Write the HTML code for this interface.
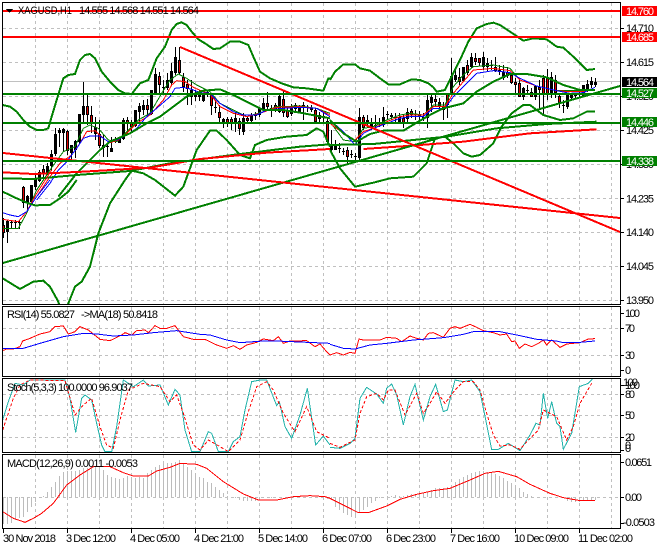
<!DOCTYPE html>
<html><head><meta charset="utf-8"><title>XAGUSD,H1</title>
<style>
html,body{margin:0;padding:0;background:#fff;width:660px;height:550px;overflow:hidden}
svg{display:block}
text{font-family:"Liberation Sans",sans-serif;font-size:11px;fill:#000}
.w text,text.w{fill:#fff}
.g{fill:none;stroke:#008000;stroke-width:6}
.r{fill:none;stroke:#ff0000;stroke-width:6}
.t{fill:none;stroke-width:3}
</style></head><body>
<svg width="660" height="550" viewBox="0 0 660 550" xmlns="http://www.w3.org/2000/svg">
<defs>
<clipPath id="cm"><rect x="3" y="3" width="617" height="301"/></clipPath>
<clipPath id="cr"><rect x="3" y="307" width="617" height="69"/></clipPath>
<clipPath id="cs"><rect x="3" y="379" width="617" height="73"/></clipPath>
<clipPath id="cd"><rect x="3" y="455" width="617" height="73"/></clipPath>
</defs>
<rect width="660" height="550" fill="#fff"/>
<g shape-rendering="crispEdges">
<!-- grid -->
<path fill="none" stroke="#c0c0c0" stroke-dasharray="3 3" d="M35.5 3V304M67.5 3V304M99.5 3V304M131.5 3V304M163.5 3V304M195.5 3V304M227.5 3V304M259.5 3V304M291.5 3V304M323.5 3V304M355.5 3V304M387.5 3V304M419.5 3V304M451.5 3V304M483.5 3V304M515.5 3V304M547.5 3V304M579.5 3V304M611.5 3V304
M35.5 307V376M67.5 307V376M99.5 307V376M131.5 307V376M163.5 307V376M195.5 307V376M227.5 307V376M259.5 307V376M291.5 307V376M323.5 307V376M355.5 307V376M387.5 307V376M419.5 307V376M451.5 307V376M483.5 307V376M515.5 307V376M547.5 307V376M579.5 307V376M611.5 307V376
M35.5 379V452M67.5 379V452M99.5 379V452M131.5 379V452M163.5 379V452M195.5 379V452M227.5 379V452M259.5 379V452M291.5 379V452M323.5 379V452M355.5 379V452M387.5 379V452M419.5 379V452M451.5 379V452M483.5 379V452M515.5 379V452M547.5 379V452M579.5 379V452M611.5 379V452
M35.5 455V528M67.5 455V528M99.5 455V528M131.5 455V528M163.5 455V528M195.5 455V528M227.5 455V528M259.5 455V528M291.5 455V528M323.5 455V528M355.5 455V528M387.5 455V528M419.5 455V528M451.5 455V528M483.5 455V528M515.5 455V528M547.5 455V528M579.5 455V528M611.5 455V528
M3 28.5H620M3 62.5H620M3 96.5H620M3 130.5H620M3 164.5H620M3 198.5H620M3 232.5H620M3 266.5H620M3 300.5H620
M3 328.5H620M3 355.5H620M3 394.5H620M3 415.5H620M3 437.5H620M3 497.5H620"/>
<path stroke="#c0c0c0" d="M3 81.5H620"/>

<!-- macd histogram -->
<path clip-path="url(#cd)" fill="none" stroke="#bcbcbc" d="M3.5 497V524M7.5 497V524M11.5 497V523M15.5 497V520M19.5 497V518M23.5 497V517M27.5 497V512M31.5 497V507M35.5 497V502M39.5 497V498M43.5 497V496M47.5 497V492M51.5 497V487M55.5 497V482M59.5 497V476M63.5 497V472M67.5 497V471M71.5 497V471M75.5 497V471M79.5 497V470M83.5 497V468M87.5 497V468M91.5 497V467M95.5 497V466M99.5 497V467M103.5 497V470M107.5 497V475M111.5 497V477M115.5 497V478M119.5 497V479M123.5 497V478M127.5 497V476M131.5 497V477M135.5 497V478M139.5 497V477M143.5 497V478M147.5 497V473M151.5 497V470M155.5 497V467M159.5 497V465M163.5 497V464M167.5 497V463M171.5 497V463M175.5 497V462M179.5 497V460M183.5 497V463M187.5 497V467M191.5 497V470M195.5 497V473M199.5 497V477M203.5 497V478M207.5 497V482M211.5 497V483M215.5 497V487M219.5 497V490M223.5 497V493M227.5 497V496M235.5 497V498M239.5 497V500M243.5 497V501M247.5 497V501M251.5 497V501M255.5 497V501M259.5 497V499M263.5 497V498M267.5 497V498M271.5 497V498M323.5 497V500M327.5 497V499M331.5 497V500M335.5 497V507M339.5 497V510M343.5 497V513M347.5 497V515M351.5 497V517M355.5 497V518M359.5 497V513M363.5 497V510M367.5 497V507M371.5 497V503M375.5 497V501M379.5 497V498M383.5 497V497M387.5 497V496M391.5 497V496M395.5 497V495M399.5 497V496M403.5 497V496M407.5 497V495M411.5 497V494M415.5 497V494M419.5 497V493M423.5 497V493M427.5 497V492M431.5 497V490M435.5 497V488M439.5 497V488M443.5 497V488M447.5 497V487M451.5 497V485M455.5 497V482M459.5 497V479M463.5 497V477M467.5 497V475M471.5 497V473M475.5 497V472M479.5 497V471M483.5 497V471M487.5 497V472M491.5 497V473M495.5 497V474M499.5 497V476M503.5 497V478M507.5 497V481M511.5 497V483M515.5 497V485M519.5 497V488M523.5 497V492M527.5 497V494M531.5 497V496M563.5 497V498M567.5 497V501M571.5 497V502M575.5 497V502M579.5 497V502M583.5 497V501M587.5 497V500M591.5 497V500M595.5 497V500"/>

<!-- candles -->
<g clip-path="url(#cm)" fill="none">
<path stroke="#000" d="M3.5 218V238M7.5 220V243M11.5 221V228M15.5 220V228M19.5 220V229M23.5 186V208M27.5 195V210M31.5 185V205M35.5 174V190M39.5 170V182M43.5 165V177M47.5 163V175M51.5 150V170M55.5 128V156M59.5 128V147M63.5 128V152M67.5 130V155M71.5 145V162M75.5 140V158M79.5 114V144M83.5 82V123M87.5 95V125M91.5 106V133M95.5 117V140M99.5 120V148M103.5 135V157M107.5 143V157M111.5 137V152M115.5 137V143M119.5 137V143M123.5 118V140M127.5 117V132M131.5 120V132M135.5 110V127M139.5 103V123M143.5 100V115M147.5 99V115M151.5 90V115M155.5 68V95M159.5 72V93M163.5 80V93M167.5 73V90M171.5 63V85M175.5 47V75M179.5 47V75M183.5 73V92M187.5 80V105M191.5 80V105M195.5 90V101M199.5 90V101M203.5 93V102M207.5 90V97M211.5 93V115M215.5 100V113M219.5 105V122M223.5 118V128M227.5 117V127M231.5 117V130M235.5 113V132M239.5 118V135M243.5 113V135M247.5 117V123M251.5 113V123M255.5 112V120M259.5 107V117M263.5 98V112M267.5 92V110M271.5 105V117M275.5 103V112M279.5 95V113M283.5 90V117M287.5 108V118M291.5 104V116M295.5 103V112M299.5 105V113M303.5 102V120M307.5 105V112M311.5 105V112M315.5 108V123M319.5 112V123M323.5 113V123M327.5 118V143M331.5 130V152M335.5 140V150M339.5 143V153M343.5 148V155M347.5 147V163M351.5 150V158M355.5 153V160M359.5 108V162M363.5 115V130M367.5 115V128M371.5 118V130M375.5 115V128M379.5 118V127M383.5 107V127M387.5 111V120M391.5 113V120M395.5 113V122M399.5 113V124M403.5 115V128M407.5 108V122M411.5 109V118M415.5 110V120M419.5 111V120M423.5 113V121M427.5 93V128M431.5 93V112M435.5 93V106M439.5 98V110M443.5 102V120M447.5 93V118M451.5 58V95M455.5 68V82M459.5 68V85M463.5 67V82M467.5 60V75M471.5 53V68M475.5 53V65M479.5 58V66M483.5 52V70M487.5 58V72M491.5 60V70M495.5 57V72M499.5 65V75M503.5 65V80M507.5 67V78M511.5 73V84M515.5 78V93M519.5 80V97M523.5 87V100M527.5 85V95M531.5 88V97M535.5 85V100M539.5 80V110M543.5 75V115M547.5 69V100M551.5 72V98M555.5 75V98M559.5 93V108M563.5 100V113M567.5 93V109M571.5 93V100M575.5 93V98M579.5 92V97M583.5 85V97M587.5 80V92M591.5 77V88M595.5 78V87"/>
<path stroke="#000" stroke-width="3" d="M3.5 225V233M7.5 221V232M11.5 222V223M15.5 222V223M19.5 222V223M23.5 187V203M27.5 196V203M31.5 185V202M35.5 179V187M39.5 172V181M43.5 169V173M47.5 166V173M51.5 154V166M55.5 134V154M59.5 130V133M63.5 129V133M67.5 131V151M71.5 145V153M75.5 141V150M79.5 114V142M83.5 106V115M87.5 106V115M91.5 115V124M95.5 127V134M99.5 134V146M103.5 145V148M107.5 146V147M111.5 148V152M115.5 140V141M119.5 138V143M123.5 120V139M127.5 120V124M131.5 123V127M135.5 110V126M139.5 106V112M143.5 105V110M147.5 105V110M151.5 90V114M155.5 74V93M159.5 76V85M163.5 87V88M167.5 80V88M171.5 71V83M175.5 57V73M179.5 60V73M183.5 77V87M187.5 84V89M191.5 90V97M195.5 94V97M199.5 94V97M203.5 94V101M207.5 92V95M211.5 95V106M215.5 107V108M219.5 112V118M223.5 119V123M227.5 119V123M231.5 119V124M235.5 118V123M239.5 121V129M243.5 118V132M247.5 118V121M251.5 115V121M255.5 115V116M259.5 108V115M263.5 103V110M267.5 103V107M271.5 108V109M275.5 105V110M279.5 96V112M283.5 99V113M287.5 110V117M291.5 106V114M295.5 105V109M299.5 106V112M303.5 105V106M307.5 107V108M311.5 108V110M315.5 110V122M319.5 115V119M323.5 116V117M327.5 121V142M331.5 144V150M335.5 144V150M339.5 148V149M343.5 151V152M347.5 150V157M351.5 154V155M355.5 156V157M359.5 117V158M363.5 117V128M367.5 120V122M371.5 122V128M375.5 125V126M379.5 123V124M383.5 117V125M387.5 114V115M391.5 115V117M395.5 117V118M399.5 117V122M403.5 118V123M407.5 112V119M411.5 111V115M415.5 116V117M419.5 115V116M423.5 117V119M427.5 100V118M431.5 97V103M435.5 99V102M439.5 102V106M443.5 107V110M447.5 93V105M451.5 76V93M455.5 75V80M459.5 77V82M463.5 67V81M467.5 65V73M471.5 57V67M475.5 58V62M479.5 58V63M483.5 57V67M487.5 63V67M491.5 65V66M495.5 67V71M499.5 70V71M503.5 72V78M507.5 72V76M511.5 75V83M515.5 82V85M519.5 83V97M523.5 88V97M527.5 90V91M531.5 92V97M535.5 86V97M539.5 87V90M543.5 78V95M547.5 78V95M551.5 77V95M555.5 80V93M559.5 96V103M563.5 105V106M567.5 95V107M571.5 95V98M575.5 95V96M579.5 94V95M583.5 85V97M587.5 84V89M591.5 81V85M595.5 82V85"/>
<path stroke="#e00000" d="M3.5 226V232M23.5 188V202M43.5 170V172M67.5 132V150M87.5 107V114M91.5 116V123M99.5 135V145M127.5 121V123M131.5 124V126M147.5 106V109M159.5 77V84M179.5 61V72M183.5 78V86M187.5 85V88M211.5 96V105M219.5 113V117M227.5 120V122M231.5 120V123M239.5 122V128M247.5 119V120M267.5 104V106M275.5 106V109M283.5 100V112M287.5 111V116M295.5 106V108M315.5 111V121M327.5 122V141M347.5 151V156M363.5 118V127M403.5 119V122M411.5 112V114M435.5 100V101M447.5 94V104M459.5 78V81M467.5 66V72M475.5 59V61M479.5 59V62M495.5 68V70M507.5 73V75M511.5 76V82M515.5 83V84M519.5 84V96M531.5 93V96M539.5 88V89M543.5 79V94M547.5 79V94M555.5 81V92M559.5 97V102"/>
</g>

<!-- main overlays, left half -->
<g clip-path="url(#cm)">
<g transform="scale(.33333)">
<polyline class="t" stroke="#008000" points="110,570 150,510 190,455 225,440 250,385 270,375 295,385 325,420 350,425 380,395 415,360 450,340 485,280 510,240 535,222 560,235 590,255 630,275 660,310 700,330 740,350 790,335 830,320 900,318 950,325 990,340"/>
<polyline class="t" stroke="#ff0000" points="110,590 150,530 180,490 215,465 240,430 260,395 285,392 310,415 330,428 355,420 380,400 410,370 450,345 490,300 515,255 530,242 555,245 580,262 610,275 630,282 660,320 700,340 740,350 780,340 830,322 900,320 950,325 990,345"/>
<polyline class="t" stroke="#0000ff" points="110,600 150,550 175,510 200,485 230,445 250,415 270,408 300,408 325,425 350,420 380,405 410,385 440,350 470,325 510,290 525,265 550,262 575,268 600,278 630,280 660,310 700,335 730,345 770,345 800,330 850,325 900,322 950,325 990,350"/>
<polyline class="g" points="8,315 30,320 50,335 70,360 90,380 110,390 130,390 145,385 155,350 170,300 190,235 205,225 225,222 240,180 255,165 270,162 285,175 305,215 330,245 355,270 375,280 395,282 420,250 445,240 470,175 495,140 515,90 530,72 545,67 560,75 575,95 595,118 615,130 640,147 660,145 690,125 720,125 745,135 760,170 780,215 810,235 845,250 880,262 920,265 970,272 985,235 990,235"/>
<polyline class="g" points="175,590 230,520 265,485 300,450 330,425 390,400 440,370 480,350 520,320 560,290 610,272 660,268 700,285 750,310 790,330 850,330 900,338 990,355"/>
<polyline class="g" points="375,540 395,512 430,520 465,540 525,587 550,560 590,450 630,392 650,392 680,420 720,465 750,475 765,435 800,420 860,410 920,405 950,385 970,395 985,430 990,440"/>
<polyline class="g" points="8,535 100,537 230,525 390,513 510,490 600,478 720,462 900,440 990,433"/>
<polyline class="r" points="8,517 100,522 250,515 450,503 600,477 800,458 990,447"/>
</g>
<g transform="translate(0,180) scale(.33333)">
<polyline class="t" stroke="#008000" points="8,145 55,145 80,100 110,30 150,-30"/>
<polyline class="t" stroke="#ff0000" points="8,118 55,125 80,95 110,40 155,-30"/>
<polyline class="t" stroke="#0000ff" points="8,98 30,105 55,110 80,95 110,50 150,0"/>
<polyline class="g" points="8,35 50,55 85,70 105,76 150,75 180,55 205,35 230,0"/>
<polyline class="g" points="8,295 60,327 100,305 130,302 150,320 175,365 185,400"/>
<polyline class="g" points="200,400 205,370 225,320 245,305 270,260 295,160 330,70 375,0"/>
</g>
<!-- right half -->
<g transform="translate(330,0) scale(.33333)">
<polyline class="t" stroke="#008000" points="0,365 40,420 75,425 100,385 130,380 170,360 210,345 240,340 280,345 310,315 345,315 370,260 400,225 430,200 490,195 540,205 570,240 620,258 680,272 720,272 760,272 795,272"/>
<polyline class="t" stroke="#ff0000" points="0,370 40,400 75,420 100,395 130,385 170,365 210,350 240,345 280,345 310,320 345,320 370,280 400,245 430,210 490,205 540,212 570,240 620,258 680,272 720,275 760,275 795,268"/>
<polyline class="t" stroke="#0000ff" points="0,360 40,395 75,435 100,400 130,385 170,370 210,355 240,350 280,350 310,325 345,325 370,290 400,260 440,220 490,212 540,218 570,235 620,258 680,272 720,280 760,278 795,262"/>
<polyline class="g" points="0,240 15,215 40,193 75,193 90,205 120,212 150,235 175,253 210,253 245,238 270,240 295,250 310,262 320,275 345,270 365,230 390,180 415,125 440,85 470,72 490,68 510,75 540,95 580,122 610,115 650,118 680,140 700,143 730,170 770,210 795,207"/>
<polyline class="g" points="0,360 40,400 80,425 120,402 160,392 220,392 270,362 300,345 340,325 400,310 440,275 490,245 540,222 590,222 650,232 700,255 750,270 795,270"/>
<polyline class="g" points="0,450 30,505 75,560 130,548 180,535 250,530 290,490 315,415 345,410 370,430 400,460 425,470 450,465 490,430 515,380 545,340 580,315 600,315 640,345 690,360 730,355 770,335 795,335"/>
<polyline class="g" points="0,435 130,432 350,410 500,385 650,372 800,365"/>
<polyline class="r" points="100,447 230,438 400,425 600,400 800,388"/>
</g>
<!-- trendlines -->
<path class="g" style="stroke-width:2" d="M3 263L620 86"/>
<path class="r" style="stroke-width:2" d="M180 47L620 232M3 153L620 218"/>
<!-- horizontal levels -->
<path class="g" style="stroke-width:2" d="M3 94H620M3 123H620M3 161H620"/>
<path class="r" style="stroke-width:2" d="M3 11H620M3 37H620"/>
</g>

<!-- RSI -->
<g clip-path="url(#cr)">
<g transform="translate(0,180) scale(.33333)">
<polyline class="t" stroke="#ff0000" points="8,512 20,507 40,507 60,500 68,483 90,475 120,462 150,455 165,440 190,438 205,462 225,455 240,440 265,450 300,478 330,482 365,465 375,458 395,465 410,452 435,450 445,458 465,437 480,445 500,445 525,437 550,470 580,478 615,478 650,495 680,505 700,497 720,508 740,495 770,487 790,477 820,482 835,470 850,490 870,483 920,482 945,500 960,492 980,515 990,525"/>
<polyline class="t" stroke="#0000ff" style="stroke-width:3" points="8,505 70,505 120,490 190,470 250,460 290,462 340,468 400,465 460,458 530,452 600,463 630,465 680,480 720,488 790,483 830,483 990,490"/>
</g>
<g transform="translate(330,180) scale(.33333)">
<polyline class="t" stroke="#ff0000" points="0,525 20,518 40,525 60,517 75,520 87,477 100,480 130,480 150,480 170,472 200,475 215,485 240,468 260,475 280,480 295,460 310,458 340,472 360,445 375,440 390,445 420,433 440,442 460,452 490,458 510,465 530,462 545,485 555,483 568,505 585,492 605,500 625,490 640,480 650,495 665,480 690,502 710,492 750,488 775,477 795,476"/>
<polyline class="t" stroke="#0000ff" points="0,493 40,505 75,507 120,495 170,490 250,480 340,473 400,463 430,455 510,455 570,467 620,478 680,483 700,488 750,487 795,483"/>
</g>
</g>

<!-- Stoch -->
<g clip-path="url(#cs)">
<g transform="translate(0,370) scale(.33333)">
<polyline class="t" stroke="#20b2aa" points="8,150 25,95 45,40 70,45 90,30 130,30 195,30 210,85 227,187 245,85 255,75 275,90 290,160 305,225 315,245 335,245 350,170 370,30 400,50 430,30 445,48 480,45 505,105 525,58 540,75 555,180 575,245 600,245 625,185 635,190 655,245 685,245 700,215 720,200 735,120 755,35 780,30 800,30 830,107 838,95 855,170 875,205 900,135 922,55 947,225 970,198 990,225"/>
<polyline class="t" stroke="#ff0000" stroke-dasharray="9 6" points="8,180 40,85 60,45 90,30 195,32 225,135 250,105 275,85 300,170 320,225 340,235 360,150 385,60 430,40 480,50 510,95 530,75 550,130 580,225 600,240 625,210 660,230 685,245 720,210 745,125 770,50 800,35 820,60 850,130 885,185 920,110 950,185 990,205"/>
</g>
<g transform="translate(330,370) scale(.33333)">
<polyline class="t" stroke="#20b2aa" points="0,232 30,235 60,220 75,205 90,85 110,52 140,72 160,100 170,55 185,42 200,75 220,165 240,80 255,43 280,150 300,80 317,43 340,125 352,120 375,30 400,35 425,30 450,65 485,238 505,238 535,220 570,242 600,195 618,160 630,165 640,70 653,145 665,95 680,160 690,170 700,238 725,190 748,50 775,40 795,18"/>
<polyline class="t" stroke="#ff0000" stroke-dasharray="9 6" points="0,220 30,232 75,210 90,130 110,80 140,70 160,90 175,60 195,60 225,135 260,70 280,130 300,100 320,65 345,100 375,60 400,35 430,35 450,60 470,130 490,195 510,228 540,225 570,238 600,205 625,180 640,120 660,130 680,140 710,210 730,170 750,100 785,40"/>
</g>
</g>

<!-- MACD signal -->
<g clip-path="url(#cd)">
<g transform="translate(0,370) scale(.33333)">
<polyline class="t" stroke="#ff0000" points="8,425 40,445 75,457 100,445 125,430 160,400 200,345 240,315 280,290 330,290 370,308 400,318 445,318 470,303 510,292 540,280 590,283 620,295 670,335 730,372 775,390 830,390 880,380 930,377 975,380 990,385"/>
</g>
<g transform="translate(330,370) scale(.33333)">
<polyline class="t" stroke="#ff0000" points="0,385 40,405 85,428 115,428 170,408 210,388 260,373 310,362 360,355 420,330 465,310 505,304 560,320 600,343 660,370 700,383 745,391 795,391"/>
</g>
</g>

<!-- frames -->
<path fill="none" stroke="#000" d="M2.5 2.5H620.5V304.5H2.5ZM2.5 306.5H620.5V376.5H2.5ZM2.5 378.5H620.5V452.5H2.5ZM2.5 454.5H620.5V528.5H2.5Z"/>
<!-- ticks -->
<path stroke="#000" d="M621 28.5H624M621 62.5H624M621 96.5H624M621 130.5H624M621 164.5H624M621 198.5H624M621 232.5H624M621 266.5H624M621 300.5H624M621 313.5H624M621 328.5H624M621 355.5H624M621 370.5H624M621 385.5H624M621 394.5H624M621 415.5H624M621 437.5H624M621 450.5H624M621 462.5H624M621 497.5H624M621 523.5H624
M3.5 529V533M67.5 529V533M131.5 529V533M195.5 529V533M259.5 529V533M323.5 529V533M387.5 529V533M451.5 529V533M515.5 529V533M579.5 529V533"/>
<path fill="#000" d="M6 9H13L9.500 13Z"/>
</g>

<!-- text -->
<text x="18" y="14" textLength="54" lengthAdjust="spacingAndGlyphs">XAGUSD,H1</text>
<text x="79" y="14" textLength="120" lengthAdjust="spacing">14.555 14.568 14.551 14.564</text>
<text x="7" y="318" textLength="68" lengthAdjust="spacing">RSI(14) 55.0827</text>
<text x="81" y="318" textLength="77" lengthAdjust="spacing">-&gt;MA(18) 50.8418</text>
<text x="7" y="391" textLength="126" lengthAdjust="spacing">Stoch(5,3,3) 100.0000 96.9037</text>
<text x="7" y="467" textLength="131" lengthAdjust="spacing">MACD(12,26,9) 0.0011 -0.0053</text>

<g>
<text x="626" y="32" textLength="28">14.710</text>
<text x="626" y="66" textLength="28">14.615</text>
<text x="626" y="100" textLength="28">14.520</text>
<text x="626" y="134" textLength="28">14.425</text>
<text x="626" y="168" textLength="28">14.330</text>
<text x="626" y="202.500" textLength="28">14.235</text>
<text x="626" y="236" textLength="28">14.140</text>
<text x="626" y="270" textLength="28">14.045</text>
<text x="626" y="304" textLength="28">13.950</text>
<text x="625" y="317" textLength="15">100</text>
<text x="625" y="332" textLength="10">70</text>
<text x="625" y="359" textLength="10">30</text>
<text x="625" y="374">0</text>
<text x="625" y="389" textLength="15">100</text>
<text x="623" y="386" textLength="15">100</text>
<text x="625" y="398" textLength="10">80</text>
<text x="625" y="419" textLength="10">50</text>
<text x="625" y="441" textLength="10">20</text>
<text x="625" y="449">0</text>
<text x="625" y="452">0</text>
<text x="625" y="466" textLength="27">0.0651</text>
<text x="625" y="501" textLength="17">0.00</text>
<text x="623" y="526" textLength="32">-0.0503</text>
</g>

<g shape-rendering="crispEdges">
<rect x="622" y="6" width="35" height="10" fill="#ff0000"/>
<rect x="622" y="32" width="35" height="10" fill="#ff0000"/>
<rect x="622" y="77" width="35" height="10" fill="#000"/>
<rect x="622" y="88" width="35" height="10" fill="#008000"/>
<rect x="622" y="117" width="35" height="10" fill="#008000"/>
<rect x="622" y="156" width="35" height="10" fill="#008000"/>
</g>
<text class="w" x="626" y="15" textLength="28">14.760</text>
<text class="w" x="626" y="41" textLength="28">14.685</text>
<text class="w" x="626" y="86" textLength="28">14.564</text>
<text class="w" x="626" y="97" textLength="28">14.527</text>
<text class="w" x="626" y="126" textLength="28">14.446</text>
<text class="w" x="626" y="165" textLength="28">14.338</text>

<text x="3" y="542" textLength="53" lengthAdjust="spacing">30 Nov 2018</text>
<text x="66" y="542" textLength="50" lengthAdjust="spacing">3 Dec 12:00</text>
<text x="130" y="542" textLength="50" lengthAdjust="spacing">4 Dec 05:00</text>
<text x="194" y="542" textLength="50" lengthAdjust="spacing">4 Dec 21:00</text>
<text x="258" y="542" textLength="50" lengthAdjust="spacing">5 Dec 14:00</text>
<text x="322" y="542" textLength="50" lengthAdjust="spacing">6 Dec 07:00</text>
<text x="386" y="542" textLength="50" lengthAdjust="spacing">6 Dec 23:00</text>
<text x="450" y="542" textLength="50" lengthAdjust="spacing">7 Dec 16:00</text>
<text x="514" y="542" textLength="55" lengthAdjust="spacing">10 Dec 09:00</text>
<text x="578" y="542" textLength="55" lengthAdjust="spacing">11 Dec 02:00</text>
</svg>
</body></html>
